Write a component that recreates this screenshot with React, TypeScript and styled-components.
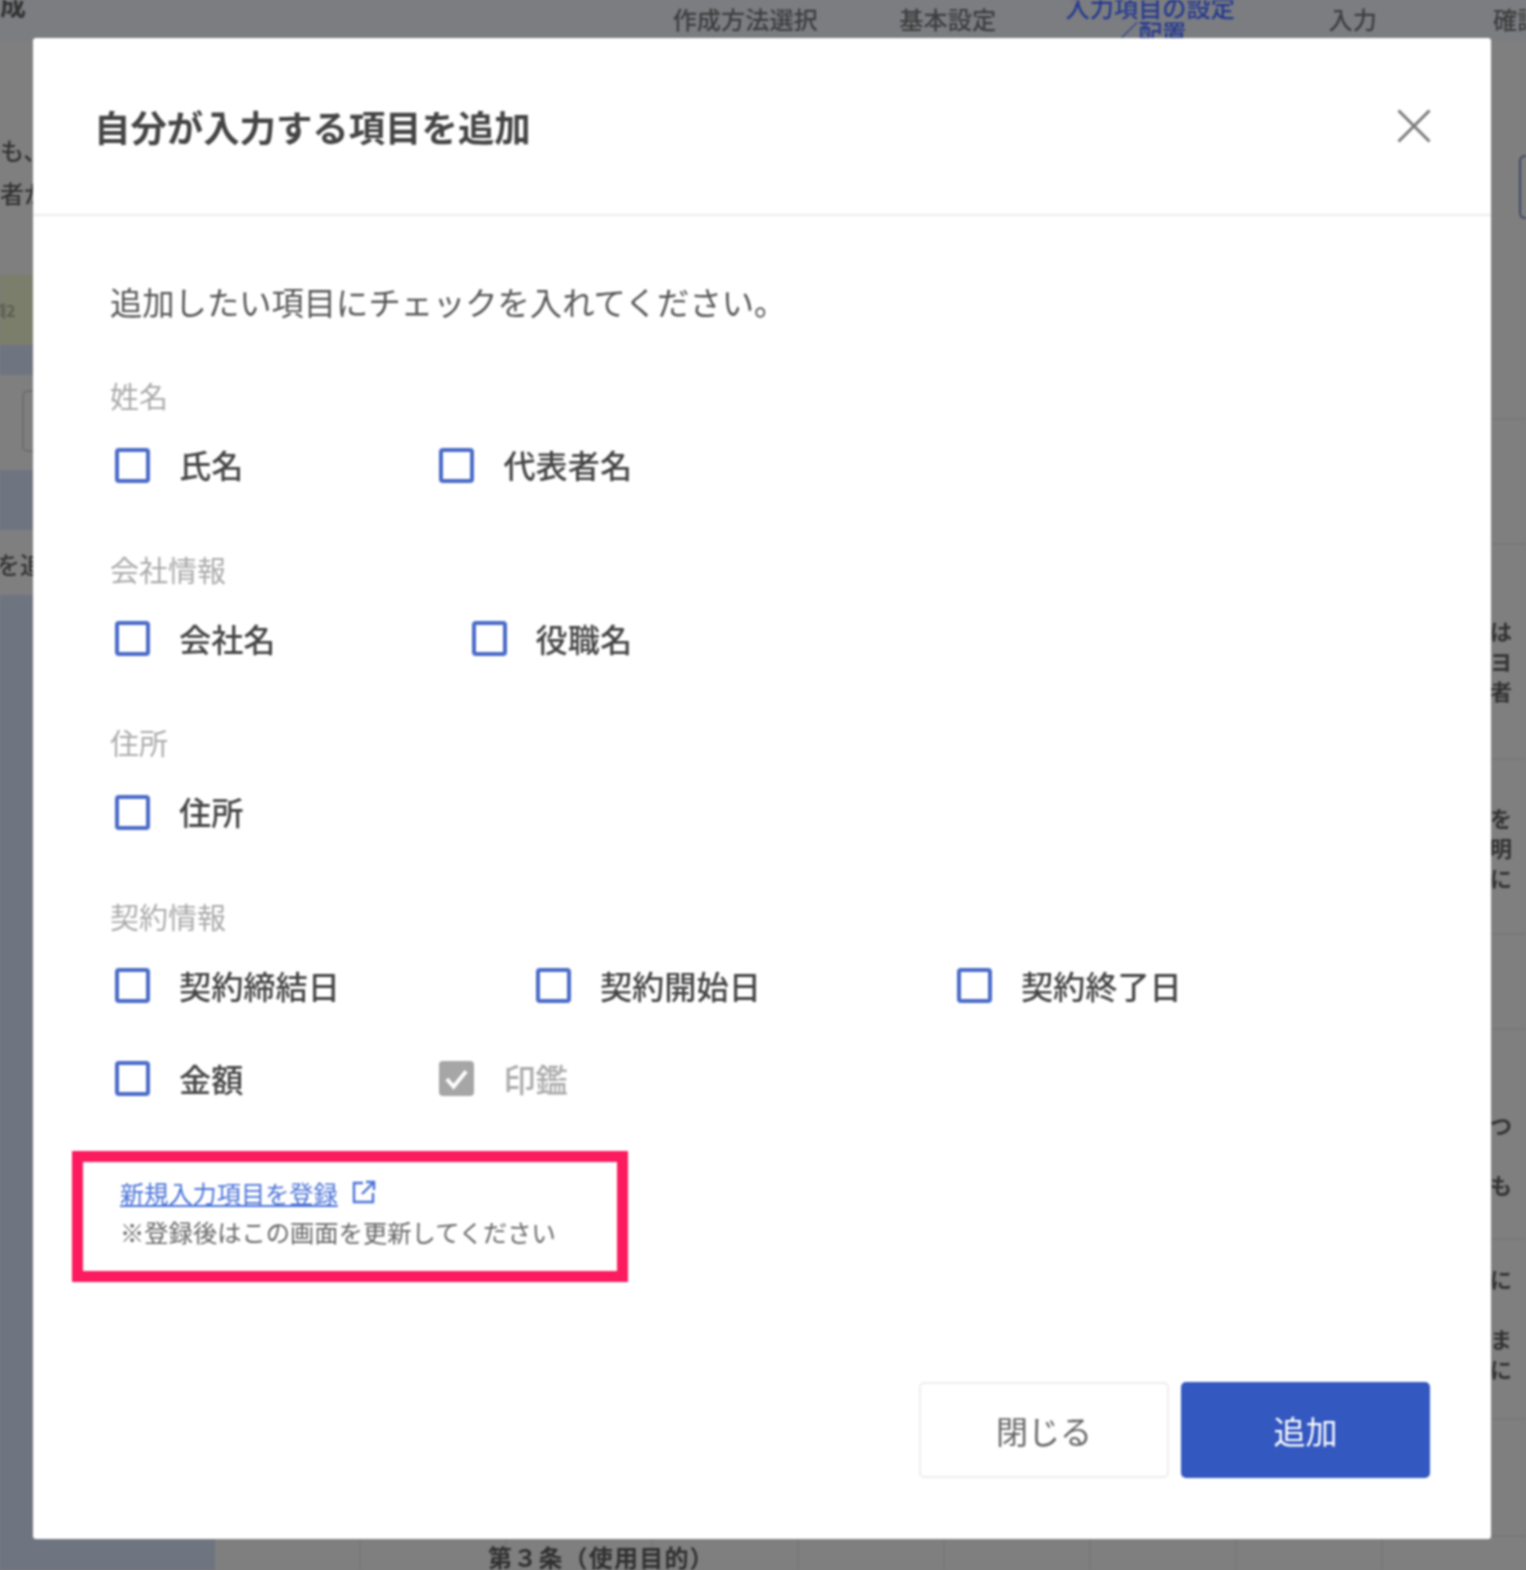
import styled, { createGlobalStyle } from "styled-components";

const sections = [
  { title: "姓名", rows: [[{ name: "氏名" }, { name: "代表者名" }]] },
  { title: "会社情報", rows: [[{ name: "会社名" }, { name: "役職名" }]] },
  { title: "住所", rows: [[{ name: "住所" }]] },
  {
    title: "契約情報",
    rows: [
      [{ name: "契約締結日" }, { name: "契約開始日" }, { name: "契約終了日" }],
      [{ name: "金額" }, { name: "印鑑", locked: true }],
    ],
  },
];

const docRows = [
  { height: 125, pad: 0, lines: [] },
  { height: 215, pad: 70, lines: ["は", "ヨ", "者"] },
  { height: 175, pad: 42, lines: ["を", "明", "に"] },
  { height: 95, pad: 0, lines: [] },
  { height: 210, pad: 79, lines: ["つ", "\u00a0", "も"] },
  { height: 180, pad: 23, lines: ["に", "\u00a0", "ま", "に"] },
  { height: 117, pad: 0, lines: [] },
];

const steps = ["作成方法選択", "基本設定", "入力項目の設定／配置", "入力", "確認"];

const App = () => {
  return (
    <Page>
      <GlobalStyle />
      <Backdrop>
        <Sidebar>
          <Band $height={41} $tone="#7b7d81">
            <PageTitle>成</PageTitle>
          </Band>
          <Band $height={234} $tone="#7f7f7f">
            <LeadGroup>
              <Lead>も、</Lead>
              <Lead>者が</Lead>
            </LeadGroup>
          </Band>
          <Band $height={70} $tone="#7b7e6b">
            <SmallTag>項2</SmallTag>
          </Band>
          <Band $height={30} $tone="#6f7481" />
          <Band $height={95} $tone="#7f7f7f">
            <FieldEdge />
          </Band>
          <Band $height={60} $tone="#6f7481" />
          <Band $height={65} $tone="#7f7f7f">
            <AddLabel>を追</AddLabel>
          </Band>
          <Band $height={0} $tone="#6f7481" $grow />
        </Sidebar>

        <Document>
          <Steps>
            {steps.map((step, index) => (
              <Step key={step} $active={index === 2}>
                {step}
              </Step>
            ))}
          </Steps>
          <FirstRow>
            <EdgeButton />
          </FirstRow>
          {docRows.map((row, index) => (
            <DocRow key={index} $height={row.height} $pad={row.pad}>
              {row.lines.map((line, lineIndex) => (
                <NoteLine key={lineIndex}>{line}</NoteLine>
              ))}
            </DocRow>
          ))}
          <DocFooter>
            <ArticleTitle>第３条（使用目的）</ArticleTitle>
          </DocFooter>
        </Document>
      </Backdrop>

      <Modal>
        <ModalHeader>
          <ModalTitle>自分が入力する項目を追加</ModalTitle>
          <CloseButton aria-label="閉じる">
            <svg width="34" height="34" viewBox="0 0 34 34" fill="none">
              <path d="M1.5 1.5 32.5 32.5M32.5 1.5 1.5 32.5" stroke="#7a7a7a" strokeWidth="3" />
            </svg>
          </CloseButton>
        </ModalHeader>

        <ModalBody>
          <Intro>追加したい項目にチェックを入れてください。</Intro>
          {sections.map((section) => (
            <Section key={section.title}>
              <SectionTitle>{section.title}</SectionTitle>
              <Rows>
                {section.rows.map((row, index) => (
                  <Row key={index}>
                    {row.map((item) => (
                      <Item key={item.name}>
                        <CheckBox $locked={"locked" in item}>
                          {"locked" in item && (
                            <svg width="28" height="28" viewBox="0 0 28 28" fill="none">
                              <path d="M4 14 11 22 24 6" stroke="#fff" strokeWidth="4" />
                            </svg>
                          )}
                        </CheckBox>
                        <ItemName $locked={"locked" in item}>{item.name}</ItemName>
                      </Item>
                    ))}
                  </Row>
                ))}
              </Rows>
            </Section>
          ))}

          <Highlight>
            <LinkLine>
              <RegisterLink href="#">新規入力項目を登録</RegisterLink>
              <svg width="24" height="24" viewBox="0 0 24 24" fill="none" stroke="#4a72d8" strokeWidth="2.4">
                <path d="M11 3H2v19h19v-9" />
                <path d="M10 14 22 2M14 2h8v8" />
              </svg>
            </LinkLine>
            <Note>※登録後はこの画面を更新してください</Note>
          </Highlight>
        </ModalBody>

        <ModalFooter>
          <CloseAction>閉じる</CloseAction>
          <AddAction>追加</AddAction>
        </ModalFooter>
      </Modal>
    </Page>
  );
};

const GlobalStyle = createGlobalStyle`
  html, body {
    margin: 0;
    padding: 0;
    background: #7f7f7f;
  }
  body {
    font-family: "Noto Sans CJK JP", "Noto Sans", sans-serif;
    overflow: hidden;
  }
`;

const Page = styled.div`
  position: relative;
  width: 1526px;
  height: 1570px;
  overflow: hidden;
  filter: blur(0.9px);
`;

const Backdrop = styled.div`
  display: flex;
  height: 100%;
`;

const Sidebar = styled.aside`
  display: flex;
  flex-direction: column;
  width: 215px;
  flex-shrink: 0;
  overflow: hidden;
`;

const Band = styled.div<{ $height: number; $tone: string; $grow?: boolean }>`
  height: ${(p) => p.$height}px;
  flex: ${(p) => (p.$grow ? 1 : "none")};
  background: ${(p) => p.$tone};
  color: #333;
  overflow: hidden;
`;

const PageTitle = styled.div`
  height: 16px;
  font-size: 26px;
  font-weight: 700;
  line-height: 8px;
`;

const LeadGroup = styled.div`
  padding-top: 87px;
`;

const Lead = styled.div`
  font-size: 24px;
  font-weight: 500;
  line-height: 43px;
  white-space: nowrap;
  color: #333;
`;

const SmallTag = styled.div`
  margin-top: 24px;
  margin-left: -10px;
  font-size: 16px;
  font-weight: 700;
  line-height: 22px;
  color: #5b5e50;
`;

const FieldEdge = styled.div`
  width: 40px;
  height: 62px;
  margin: 15px 0 0 22px;
  box-sizing: border-box;
  border: 2px solid #6e6e6e;
  border-radius: 6px;
`;

const AddLabel = styled.div`
  margin: 16px 0 0 -4px;
  font-size: 24px;
  font-weight: 500;
  line-height: 36px;
  white-space: nowrap;
  color: #333;
`;

const Document = styled.main`
  display: flex;
  flex: 1;
  flex-direction: column;
  min-width: 0;
  background: #7f7f7f;
  overflow: hidden;
`;

const Steps = styled.nav`
  display: flex;
  flex-shrink: 0;
  height: 41px;
  padding-left: 429px;
  background: #7b7d81;
`;

const Step = styled.div<{ $active?: boolean }>`
  display: flex;
  flex: 0 0 202.5px;
  align-items: center;
  justify-content: center;
  box-sizing: border-box;
  padding: 0 ${(p) => (p.$active ? "16px" : "0")} 4px;
  font-size: 24.2px;
  font-weight: 500;
  line-height: 25px;
  text-align: center;
  color: ${(p) => (p.$active ? "#25398f" : "#3e3e3e")};

  &:last-child {
    justify-content: flex-start;
    padding-left: 39px;
  }
`;

const FirstRow = styled.div`
  display: flex;
  flex-shrink: 0;
  justify-content: flex-end;
  box-sizing: border-box;
  height: 379px;
  padding-top: 114px;
  border-bottom: 2px solid #797979;
`;

const EdgeButton = styled.div`
  width: 5px;
  height: 60px;
  border: 2px solid #3e4a66;
  border-right: none;
  border-radius: 6px 0 0 6px;
`;

const DocRow = styled.div<{ $height: number; $pad: number }>`
  flex-shrink: 0;
  box-sizing: border-box;
  height: ${(p) => p.$height}px;
  padding: ${(p) => p.$pad}px 0 0 1275px;
  border-bottom: 2px solid #797979;
`;

const NoteLine = styled.div`
  font-size: 22px;
  font-weight: 700;
  line-height: 30px;
  color: #333;
`;

const DocFooter = styled.div`
  flex: 1;
  display: flex;
  align-items: center;
  padding: 2px 0 0 273px;
  background: repeating-linear-gradient(90deg, transparent 0 144px, #787878 144px 146px);
`;

const ArticleTitle = styled.div`
  font-size: 24px;
  font-weight: 700;
  letter-spacing: 1.2px;
  color: #303030;
  white-space: nowrap;
`;

const Modal = styled.div`
  position: absolute;
  top: 38px;
  left: 33px;
  display: flex;
  flex-direction: column;
  width: 1458px;
  height: 1501px;
  background: #fff;
  border-radius: 3px;
`;

const ModalHeader = styled.header`
  display: flex;
  flex-shrink: 0;
  align-items: center;
  justify-content: space-between;
  box-sizing: border-box;
  height: 178px;
  padding: 0 60px 0 61px;
  border-bottom: 2px solid #ededed;
`;

const ModalTitle = styled.h2`
  margin: 0;
  font-size: 36.4px;
  font-weight: 700;
  line-height: 50px;
  color: #444;
`;

const CloseButton = styled.button`
  display: flex;
  padding: 0;
  border: none;
  background: none;
`;

const ModalBody = styled.div`
  padding-top: 65px;
`;

const Intro = styled.p`
  margin: 0 0 54px 77px;
  font-size: 32.3px;
  line-height: 40px;
  color: #555;
`;

const Section = styled.section`
  margin-bottom: 60.6px;
  padding-left: 77px;
`;

const SectionTitle = styled.h3`
  margin: 0 0 27px;
  font-size: 29px;
  font-weight: 400;
  line-height: 40px;
  color: #aaa;
`;

const Rows = styled.div`
  display: flex;
  flex-direction: column;
  gap: 47px;
  padding-left: 5px;
`;

const Row = styled.div`
  display: flex;
  gap: 196px;
`;

const Item = styled.label`
  display: flex;
  align-items: center;
  gap: 29px;
  height: 46px;
`;

const CheckBox = styled.span<{ $locked?: boolean }>`
  display: flex;
  align-items: center;
  justify-content: center;
  box-sizing: border-box;
  width: 35px;
  height: 35px;
  border: 4px solid ${(p) => (p.$locked ? "#a6a6a6" : "#4a6bc8")};
  border-radius: 4px;
  background: ${(p) => (p.$locked ? "#a6a6a6" : "#fff")};
`;

const ItemName = styled.span<{ $locked?: boolean }>`
  padding-bottom: 2px;
  font-size: 32.2px;
  font-weight: 500;
  line-height: 46px;
  white-space: nowrap;
  color: ${(p) => (p.$locked ? "#aaa" : "#444")};
`;

const Highlight = styled.div`
  display: flex;
  flex-direction: column;
  justify-content: center;
  box-sizing: border-box;
  width: 556px;
  height: 131px;
  margin: -11.6px 0 0 39px;
  padding: 0 0 7px 37px;
  border: 11px solid #fb1b5e;
`;

const LinkLine = styled.div`
  display: flex;
  align-items: center;
  gap: 14px;
  height: 36px;
  padding-bottom: 2px;
`;

const RegisterLink = styled.a`
  font-size: 24.2px;
  color: #4a72d8;
`;

const Note = styled.div`
  font-size: 24.3px;
  line-height: 39px;
  white-space: nowrap;
  color: #666;
`;

const ModalFooter = styled.footer`
  display: flex;
  flex-shrink: 0;
  justify-content: flex-end;
  gap: 12px;
  margin-top: auto;
  padding: 0 61px 61px 0;
`;

const CloseAction = styled.button`
  width: 250px;
  height: 96px;
  border: 2px solid #eee;
  border-radius: 5px;
  background: #fff;
  font-family: inherit;
  font-size: 32px;
  color: #666;
`;

const AddAction = styled.button`
  width: 249px;
  height: 96px;
  border: none;
  border-radius: 5px;
  background: #3358c0;
  font-family: inherit;
  font-size: 32px;
  color: #fff;
`;

export default App;
